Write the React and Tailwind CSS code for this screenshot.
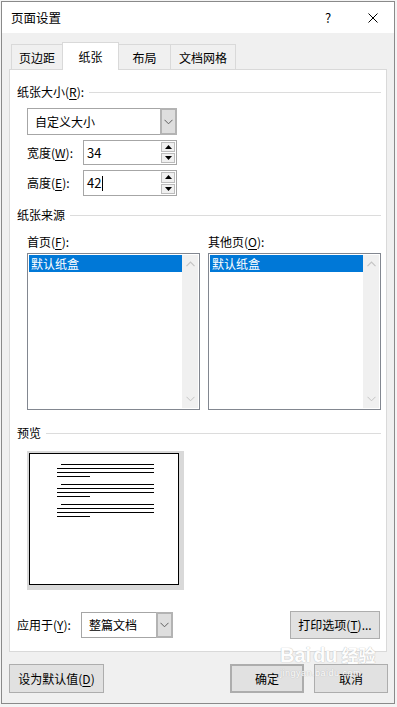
import React from 'react';

// Mnemonic letter (underlined access key)
const K = ({ children }) => <span className="underline underline-offset-2">{children}</span>;

const ChevronDown = ({ color = '#606060' }) => (
  <svg width="9" height="6" viewBox="0 0 9 6">
    <path d="M0.5 0.8 L4.5 4.8 L8.5 0.8" fill="none" stroke={color} strokeWidth="1" />
  </svg>
);

const ChevronUp = ({ color = '#c4c4c4' }) => (
  <svg width="9" height="6" viewBox="0 0 9 6">
    <path d="M0.5 5.2 L4.5 1.2 L8.5 5.2" fill="none" stroke={color} strokeWidth="1.2" />
  </svg>
);

const GroupHeader = ({ children, className = '' }) => (
  <div className={`flex items-center h-[16px] ${className}`}>
    <span className="whitespace-nowrap">{children}</span>
    <div className="flex-1 h-px bg-[#dcdcdc] ml-[5px]" />
  </div>
);

const Combo = ({ value, className = '' }) => (
  <div className={`flex bg-white border border-[#a6a6a6] ${className}`}>
    <div className="flex-1 flex items-center pl-[7px]">{value}</div>
    <div className="w-[17px] -my-px -mr-px bg-[#dedede] border-2 border-[#b3b3b3] flex items-center justify-center">
      <ChevronDown />
    </div>
  </div>
);

const Spinner = ({ value, caret }) => (
  <div className="w-[94px] h-full flex bg-white border border-[#a6a6a6]">
    <div className="flex-1 flex items-center pl-[3px] text-[13px]">
      {value}
      {caret && <span className="w-px h-[15px] bg-black ml-px" />}
    </div>
    <div className="w-[16px] flex flex-col gap-px p-px">
      <div className="flex-1 bg-[#f0f0f0] border border-[#bcbcbc] flex items-center justify-center">
        <svg width="7" height="4" viewBox="0 0 7 4"><path d="M0 4 L3.5 0 L7 4 Z" fill="#000" /></svg>
      </div>
      <div className="flex-1 bg-[#f0f0f0] border border-[#bcbcbc] flex items-center justify-center">
        <svg width="7" height="4" viewBox="0 0 7 4"><path d="M0 0 L3.5 4 L7 0 Z" fill="#000" /></svg>
      </div>
    </div>
  </div>
);

const ListBox = () => (
  <div className="w-[173px] h-[157px] border border-[#828790] bg-white p-px flex">
    <div className="flex-1">
      <div className="h-[17px] bg-[#0078d7] text-white flex items-center pl-[2px]">默认纸盒</div>
    </div>
    <div className="w-[16px] bg-[#f0f0f0] flex flex-col justify-between items-center py-[6px]">
      <ChevronUp />
      <ChevronDown color="#c4c4c4" />
    </div>
  </div>
);

const Paragraph = () => (
  <div className="flex flex-col gap-[3px]">
    <div className="h-px bg-black w-[93px] ml-[4px]" />
    <div className="h-px bg-black w-[97px]" />
    <div className="h-px bg-black w-[97px]" />
    <div className="h-px bg-black w-[33px]" />
  </div>
);

const Button = ({ children, className = '' }) => (
  <div className={`flex items-center justify-center bg-[#e1e1e1] border border-[#adadad] ${className}`}>
    {children}
  </div>
);

const App = () => {
  return (
    <div className="w-[397px] h-[707px] bg-[#f4f4f4] pl-[1px] pt-[1px] font-['Noto_Sans_CJK_SC','Noto_Sans',sans-serif] text-[12px] leading-[16px] text-black">
      <div className="w-[394px] border border-[#8a8a8a] bg-[#f0f0f0] relative">
        {/* Title bar */}
        <div className="h-[31px] bg-white flex items-center pl-[9px] pr-[16px]">
          <span className="text-[12.5px]">页面设置</span>
          <span className="ml-auto w-[10px] text-center text-[13px]">?</span>
          <svg className="ml-[35px]" width="10" height="10" viewBox="0 0 10 10">
            <path d="M0.5 0.5 L9.5 9.5 M9.5 0.5 L0.5 9.5" stroke="#000" strokeWidth="1" />
          </svg>
        </div>

        <div className="px-[7px]">
          {/* Tabs */}
          <div className="flex items-end h-[27px] mt-[9px] pl-[2px]">
            <div className="w-[52px] h-[25px] border border-b-0 border-[#d9d9d9] bg-[#f0f0f0] flex items-center justify-center pt-[2px]">页边距</div>
            <div className="-ml-px w-[57px] h-[28px] mb-[-1px] relative z-10 border border-b-0 border-[#d9d9d9] bg-white flex items-center justify-center">纸张</div>
            <div className="-ml-px w-[53px] h-[25px] border border-b-0 border-[#d9d9d9] bg-[#f0f0f0] flex items-center justify-center pt-[2px]">布局</div>
            <div className="-ml-px w-[66px] h-[25px] border border-b-0 border-[#d9d9d9] bg-[#f0f0f0] flex items-center justify-center pt-[2px]">文档网格</div>
          </div>

          {/* Panel */}
          <div className="h-[583px] border border-[#d9d9d9] bg-white pl-[7px] pr-[5px] flex flex-col">
            <GroupHeader className="mt-[14px]">纸张大小(<K>R</K>):</GroupHeader>
            <Combo value="自定义大小" className="ml-[10px] mt-[8px] w-[150px] h-[27px]" />
            <div className="ml-[10px] mt-[5px] h-[25px] flex items-center">
              <span className="w-[56px]">宽度(<K>W</K>):</span>
              <Spinner value="34" />
            </div>
            <div className="ml-[10px] mt-[5px] h-[26px] flex items-center">
              <span className="w-[56px]">高度(<K>E</K>):</span>
              <Spinner value="42" caret />
            </div>

            <GroupHeader className="mt-[11px]">纸张来源</GroupHeader>
            <div className="ml-[10px] mt-[11px] flex gap-[8px] h-[16px]">
              <span className="w-[173px]">首页(<K>F</K>):</span>
              <span className="w-[173px]">其他页(<K>O</K>):</span>
            </div>
            <div className="ml-[10px] mt-[3px] flex gap-[8px]">
              <ListBox />
              <ListBox />
            </div>

            <GroupHeader className="mt-[15px]">预览</GroupHeader>
            <div className="ml-[10px] mt-[10px] w-[157px] h-[139px] bg-[#d9d9d9] pl-[2px] pt-[2px]">
              <div className="w-[150px] h-[132px] bg-white border border-black pl-[27px] pt-[10px] flex flex-col gap-[7px]">
                <Paragraph />
                <Paragraph />
                <Paragraph />
              </div>
            </div>

            <div className="mt-[21px] h-[28px] flex items-center">
              <span className="w-[64px]">应用于(<K>Y</K>):</span>
              <Combo value="整篇文档" className="w-[92px] h-[26px]" />
              <Button className="ml-auto mr-[1px] w-[90px] h-[28px]">打印选项(<K>T</K>)...</Button>
            </div>
          </div>

          {/* Footer buttons */}
          <div className="mt-[12px] h-[29px] flex">
            <Button className="w-[95px] h-[29px]">设为默认值(<K>D</K>)</Button>
            <Button className="ml-auto w-[74px] h-[29px] border-2 border-[#0078d7]">确定</Button>
            <Button className="ml-[10px] mr-[-1px] w-[74px] h-[29px]">取消</Button>
          </div>
          <div className="h-[10px]" />
        </div>

        {/* Watermark overlay */}
        <div className="absolute left-[278px] top-[642px] pointer-events-none select-none text-white opacity-90 [text-shadow:0_0_1px_#bdbdbd,0_0_1px_#bdbdbd]">
          <div className="flex items-end font-['Liberation_Sans',sans-serif] font-bold text-[20px] leading-[22px]">
            <span>Bai</span>
            <span className="ml-[2px]">du</span>
            <span className="ml-[4px] font-['Noto_Sans_CJK_SC',sans-serif] text-[17px]">经验</span>
          </div>
          <div className="font-['Liberation_Sans',sans-serif] text-[9px] leading-[10px] mt-[2px] tracking-[0.5px]">jingyan.baidu.com</div>
        </div>
      </div>
    </div>
  );
};

export default App;
